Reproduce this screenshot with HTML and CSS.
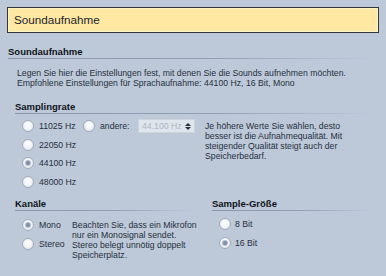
FILE: index.html
```html
<!DOCTYPE html>
<html>
<head>
<meta charset="utf-8">
<link rel="stylesheet" href="styles.css">
</head>
<body>
<div class="header">Soundaufnahme</div>

<div class="section first">
  <div class="title">Soundaufnahme</div>
  <p class="desc">Legen Sie hier die Einstellungen fest, mit denen Sie die Sounds aufnehmen möchten.<br>Empfohlene Einstellungen für Sprachaufnahme: 44100 Hz, 16 Bit, Mono</p>
</div>

<div class="section rate">
  <div class="title">Samplingrate</div>
  <div class="body-row">
    <div class="rates rate-col">
      <div class="row">
        <label class="radio w-rate"><span class="dot"></span>11025 Hz</label>
        <label class="radio w-other"><span class="dot"></span>andere:</label>
        <span class="spin"><span class="spin-val">44.100 Hz</span><span class="arrows"><span class="up"></span><span class="down"></span></span></span>
      </div>
      <div class="row"><label class="radio"><span class="dot"></span>22050 Hz</label></div>
      <div class="row"><label class="radio"><span class="dot on"></span>44100 Hz</label></div>
      <div class="row"><label class="radio"><span class="dot"></span>48000 Hz</label></div>
    </div>
    <p class="note rate-note">Je höhere Werte Sie wählen, desto<br>besser ist die Aufnahmequalität. Mit<br>steigender Qualität steigt auch der<br>Speicherbedarf.</p>
  </div>
</div>

<div class="two">
  <div class="section ch">
    <div class="title">Kanäle</div>
    <div class="body-row">
      <div class="rates ch-col">
        <div class="row"><label class="radio"><span class="dot on"></span>Mono</label></div>
        <div class="row"><label class="radio"><span class="dot"></span>Stereo</label></div>
      </div>
      <p class="note ch-note">Beachten Sie, dass ein Mikrofon<br>nur ein Monosignal sendet.<br>Stereo belegt unnötig doppelt<br>Speicherplatz.</p>
    </div>
  </div>
  <div class="section size">
    <div class="title">Sample-Größe</div>
    <div class="rates size-col">
      <div class="row"><label class="radio"><span class="dot"></span>8 Bit</label></div>
      <div class="row"><label class="radio"><span class="dot on"></span>16 Bit</label></div>
    </div>
  </div>
</div>
</body>
</html>
```
FILE: styles.css
```css
html, body {
  margin: 0;
  padding: 0;
}
body {
  background: #bdc9d9;
  font-family: "Liberation Sans", Arial, sans-serif;
  font-size: 8.7px;
  line-height: 10px;
  color: #26303c;
  width: 386px;
  height: 276px;
  overflow: hidden;
}
.header {
  margin: 7px 7px 0 7px;
  height: 24px;
  border: 1px solid #33373d;
  background: #ffe8a2;
  box-shadow: inset 1px 1px 0 #fff2c4, inset -1px -1px 0 #fff4cc;
  padding-left: 6px;
  font-size: 11.7px;
  line-height: 24px;
  color: #1c2430;
}
.title {
  font-weight: bold;
  font-size: 9.5px;
  line-height: 12px;
  color: #0f1318;
}
.title::after {
  content: "";
  display: block;
  height: 1px;
  background: linear-gradient(to right, #8a96a9 0%, #939fb2 55%, #bdc9d9 100%);
}
.section.first {
  margin-top: 13px;
  padding: 0 11px 0 8px;
}
.desc {
  margin: 8.5px 0 0 9px;
  white-space: nowrap;
}
.section.rate {
  margin-top: 13.5px;
  padding: 0 11px 0 15px;
}
.body-row {
  display: flex;
}
.rates {
  display: flex;
  flex-direction: column;
}
.rate-col {
  width: 180px;
  margin-top: 2.75px;
}
.row {
  display: flex;
  align-items: center;
  height: 18.5px;
}
.radio {
  display: flex;
  align-items: center;
  margin-left: 7px;
  white-space: nowrap;
}
.w-rate {
  width: 54px;
}
.w-other {
  width: 48px;
}
.dot {
  box-sizing: border-box;
  width: 12px;
  height: 12px;
  border-radius: 50%;
  border: 1px solid #a2abb8;
  background: radial-gradient(circle at 50% 40%, #ffffff 0%, #f1f3f6 50%, #d9dee6 100%);
  margin-right: 5px;
  position: relative;
  flex: none;
}
.dot.on::after {
  content: "";
  position: absolute;
  left: 3px;
  top: 3px;
  width: 4px;
  height: 4px;
  border-radius: 50%;
  background: #7f8da6;
  box-shadow: 0 0 0 1px #b3bdcc;
}
.spin {
  box-sizing: border-box;
  display: flex;
  align-items: center;
  margin-left: 7px;
  width: 57px;
  height: 14px;
  border: 1px solid #ccd3dc;
  background: #dfe5ec;
  color: #aeb6c2;
}
.spin-val {
  flex: 1;
  padding-left: 3px;
  white-space: nowrap;
}
.arrows {
  display: flex;
  flex-direction: column;
  gap: 1px;
  margin-right: 3px;
}
.up, .down {
  width: 0;
  height: 0;
  border-left: 3px solid transparent;
  border-right: 3px solid transparent;
}
.up { border-bottom: 3px solid #2a303a; }
.down { border-top: 3px solid #2a303a; }
.note {
  margin: 0;
  white-space: nowrap;
}
.rate-note {
  margin-left: 10px;
  padding-top: 7px;
}
.two {
  display: flex;
  margin-top: 7.25px;
}
.section.ch {
  box-sizing: border-box;
  width: 197px;
  padding-left: 15px;
}
.ch .title {
  margin-right: 4px;
}
.ch-col {
  width: 57px;
  margin-top: 4.75px;
}
.ch-note {
  padding-top: 9px;
}
.section.size {
  margin-left: 15px;
  flex: 1;
  padding-right: 14px;
}
.size-col {
  margin-top: 3.75px;
}
.size-col .radio .dot {
  margin-right: 4px;
}
```
